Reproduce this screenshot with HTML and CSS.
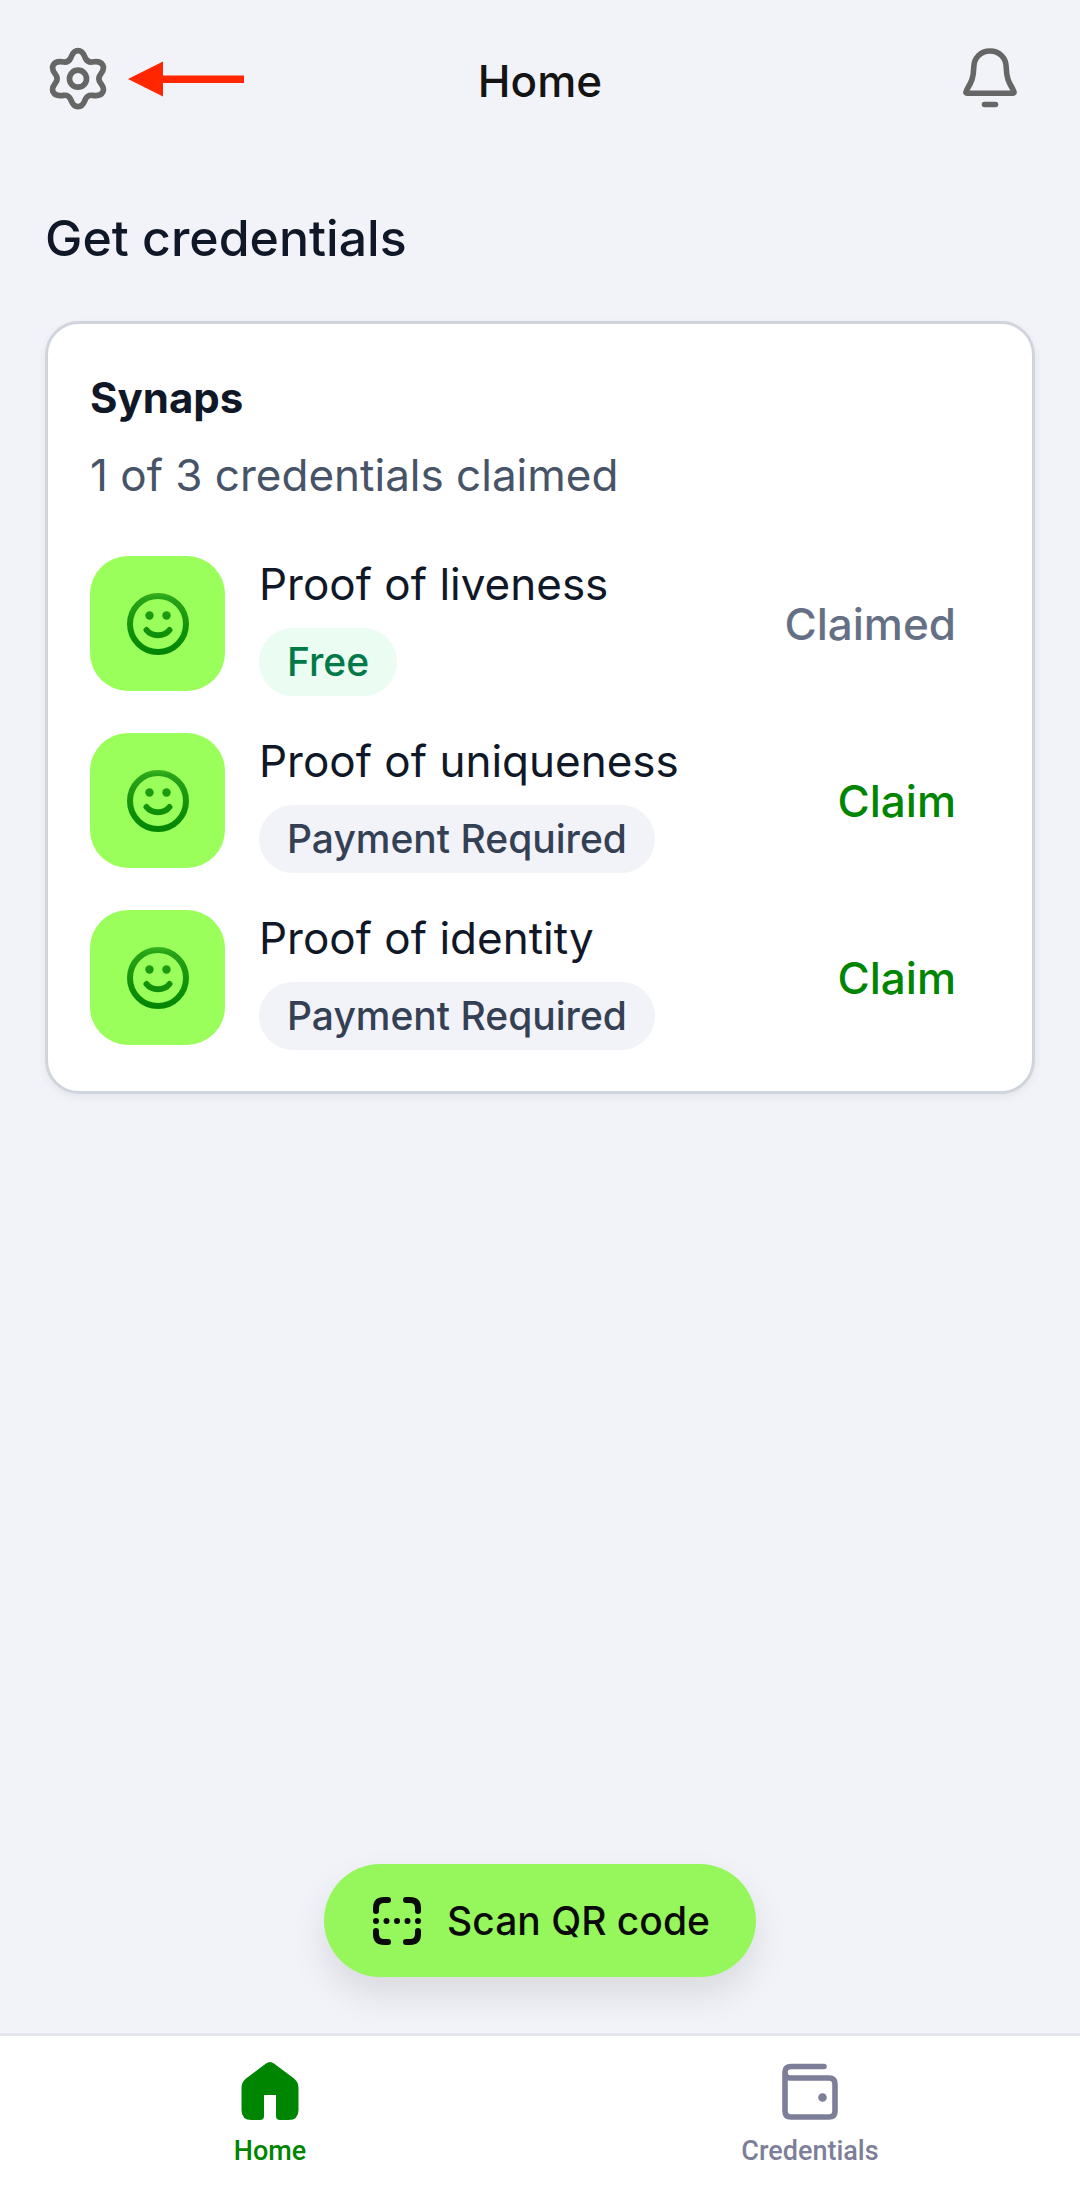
FILE: index.html
```html
<!DOCTYPE html>
<html lang="en">
<head>
    <meta charset="UTF-8">
    <meta name="viewport" content="width=device-width, initial-scale=1.0">
    <title>Home</title>
    <link rel="stylesheet" href="styles.css">
</head>
<body>
    <!-- shared smiley, used by every credential row -->
    <svg class="sprite" aria-hidden="true">
        <defs>
            <linearGradient id="smile-fill" gradientUnits="userSpaceOnUse" x1="32" y1="0" x2="32" y2="64">
                <stop offset="0" stop-color="#3cb722"/>
                <stop offset="0.1" stop-color="#27a318"/>
                <stop offset="1" stop-color="#008400"/>
            </linearGradient>
            <symbol id="smile" viewBox="0 0 64 64">
                <circle cx="32" cy="32" r="28" fill="none" stroke="url(#smile-fill)" stroke-width="6"/>
                <circle cx="23.5" cy="23.5" r="4.2" fill="url(#smile-fill)"/>
                <circle cx="40.5" cy="23.5" r="4.2" fill="url(#smile-fill)"/>
                <path d="M20.500 38C26 45 38 45 43.500 38" fill="none" stroke="url(#smile-fill)" stroke-width="6" stroke-linecap="round"/>
            </symbol>
        </defs>
    </svg>

    <div class="app">
        <header class="topbar">
            <div class="topbar-left">
                <button class="icon-btn" aria-label="Settings">
                    <svg width="60" height="66" viewBox="55 48 180 198" fill="none" stroke="#666" stroke-width="17">
                        <path d="M145 62C160 62 163 75 167 84C171 93 178 97 188 96C200 94 213 93 219 105C226 117 218 126 212 134C207 141 207 151 212 158C218 166 226 175 219 187C213 199 200 198 188 196C178 195 171 199 167 208C163 217 160 230 145 230C130 230 127 217 123 208C119 199 112 195 102 196C90 198 77 199 71 187C64 175 72 166 78 158C83 151 83 141 78 134C72 126 64 117 71 105C77 93 90 94 102 96C112 97 119 93 123 84C127 75 130 62 145 62Z"/>
                        <circle cx="145" cy="146" r="25.500"/>
                    </svg>
                </button>
                <svg class="arrow" width="116" height="36" viewBox="0 0 116 36" fill="#ff2600" aria-hidden="true">
                    <path d="M0 18L35 0.500V14.500H116V22H35V35.500Z"/>
                </svg>
            </div>
            <h1 class="topbar-title">Home</h1>
            <div class="topbar-right">
                <button class="icon-btn" aria-label="Notifications">
                    <svg width="60" height="66" viewBox="0 0 60 66" fill="none" stroke="#666" stroke-width="5.600" stroke-linecap="round" stroke-linejoin="round">
                        <path d="M30 5C20.500 5 14 12 13.800 21C13.500 32 11.500 36 7.500 42.500C5 47 5.200 47.200 9 47.200H51C54.800 47.200 55 47 52.500 42.500C48.500 36 46.500 32 46.200 21C46 12 39.500 5 30 5Z"/>
                        <path d="M24.500 58.500H35.500"/>
                    </svg>
                </button>
            </div>
        </header>

        <main class="content">
            <h2 class="section-title">Get credentials</h2>

            <section class="card">
                <h3 class="card-title">Synaps</h3>
                <p class="card-subtitle">1 of 3 credentials claimed</p>

                <ul class="credentials">
                    <li class="credential">
                        <div class="tile"><svg width="64" height="64"><use href="#smile"/></svg></div>
                        <div class="credential-info">
                            <span class="credential-name">Proof of liveness</span>
                            <span class="badge badge-free">Free</span>
                        </div>
                        <button class="claim" disabled>Claimed</button>
                    </li>
                    <li class="credential">
                        <div class="tile"><svg width="64" height="64"><use href="#smile"/></svg></div>
                        <div class="credential-info">
                            <span class="credential-name">Proof of uniqueness</span>
                            <span class="badge">Payment Required</span>
                        </div>
                        <button class="claim">Claim</button>
                    </li>
                    <li class="credential">
                        <div class="tile"><svg width="64" height="64"><use href="#smile"/></svg></div>
                        <div class="credential-info">
                            <span class="credential-name">Proof of identity</span>
                            <span class="badge">Payment Required</span>
                        </div>
                        <button class="claim">Claim</button>
                    </li>
                </ul>
            </section>
        </main>

        <button class="scan-btn">
            <svg width="48" height="48" viewBox="0 0 48 48" fill="none" stroke="#0a0a0a" stroke-width="6" stroke-linecap="round" aria-hidden="true">
                <path d="M3 14V11Q3 3 11 3H15M33 3H37Q45 3 45 11V14M45 34V37Q45 45 37 45H33M15 45H11Q3 45 3 37V34"/>
                <path d="M3 24H45.100" stroke-dasharray="0 10.500"/>
            </svg>
            Scan QR code
        </button>

        <nav class="tabs">
            <a class="tab active" href="#home">
                <svg width="58" height="60" viewBox="0 0 58 60" fill="currentColor" aria-hidden="true">
                    <path d="M25 2.500Q29 -0.500 33 2.500L53 17.500Q57.500 21 57.500 27V49Q57.500 59 47.500 59H39Q35 59 35 55V34H23V55Q23 59 19 59H10.500Q0.500 59 0.500 49V27Q0.500 21 5 17.500Z"/>
                </svg>
                Home
            </a>
            <a class="tab" href="#credentials">
                <svg width="58" height="60" viewBox="0 0 58 60" fill="none" stroke="currentColor" stroke-width="5.600" stroke-linecap="round" aria-hidden="true">
                    <path d="M43 5.500H10Q4 5.500 4 11V50Q4 56 10 56H48Q54 56 54 50V23Q54 17 48 17H9Q4 17 4 11"/>
                    <circle cx="41.500" cy="36.500" r="4.300" fill="currentColor" stroke="none"/>
                </svg>
                Credentials
            </a>
        </nav>
    </div>
</body>
</html>
```

FILE: styles.css
```css
* {
    box-sizing: border-box;
}
body {
    margin: 0;
    background: #f2f3f8;
    color: #101828;
    font-family: Inter, "Liberation Sans", sans-serif;
    font-size: 44px;
    line-height: 52px;
}
h1, h2, h3, p, ul {
    margin: 0;
    padding: 0;
}
button {
    border: none;
    background: none;
    padding: 0;
    font: inherit;
    color: inherit;
    cursor: pointer;
}
svg {
    display: block;
    flex-shrink: 0;
}
.sprite {
    position: absolute;
    width: 0;
    height: 0;
}
.app {
    display: flex;
    flex-direction: column;
    min-height: 100vh;
}

/* Top bar */
.topbar {
    display: grid;
    grid-template-columns: 1fr auto 1fr;
    align-items: center;
    padding: 46px 48px 42px;
}
.topbar-left {
    display: flex;
    align-items: center;
    gap: 20px;
}
.topbar-right {
    display: flex;
    justify-content: flex-end;
    padding-right: 12px;
}
.topbar-title {
    padding-top: 4px;
    font-size: 44px;
    font-weight: 500;
    color: #141414;
}

/* Credentials card */
.content {
    flex: 1;
    padding: 56px 45px;
}
.section-title {
    font-size: 50px;
    font-weight: 500;
    line-height: 56px;
}
.card {
    margin-top: 55px;
    padding: 48px 76px 41px 42px;
    background: #fff;
    border: 3px solid #d0d5dd;
    border-radius: 34px;
    box-shadow: 0 3px 8px rgba(16, 24, 40, 0.06);
}
.card-title {
    font-size: 42px;
    font-weight: 700;
}
.card-subtitle {
    margin-top: 25px;
    color: #475467;
}
.credentials {
    display: flex;
    flex-direction: column;
    gap: 37px;
    margin-top: 55px;
    list-style: none;
}
.credential {
    display: flex;
    align-items: flex-start;
    gap: 34px;
}
.tile {
    display: flex;
    align-items: center;
    justify-content: center;
    width: 135px;
    height: 135px;
    border-radius: 38px;
    background: #9bff5b;
}
.credential-info {
    display: flex;
    flex: 1;
    flex-direction: column;
    align-items: flex-start;
    gap: 16px;
}
.credential-name {
    line-height: 56px;
}
.badge {
    padding: 0 28px;
    border-radius: 34px;
    background: #f2f3f8;
    color: #344054;
    font-size: 39px;
    font-weight: 500;
    line-height: 68px;
}
.badge-free {
    background: #ebfcf3;
    color: #027a48;
}
.claim {
    height: 135px;
    color: #008500;
    font-weight: 500;
}
.claim:disabled {
    color: #667085;
    cursor: default;
}

/* Floating scan button */
.scan-btn {
    display: flex;
    align-items: center;
    align-self: center;
    gap: 26px;
    height: 113px;
    margin-bottom: 56px;
    padding: 0 46px 0 49px;
    border-radius: 57px;
    background: #95f75b;
    color: #0a0a0a;
    font-size: 39px;
    font-weight: 500;
    box-shadow: 0 18px 36px rgba(0, 0, 0, 0.1);
}

/* Bottom tabs */
.tabs {
    display: flex;
    background: #fff;
    border-top: 3px solid #e4e4ee;
}
.tab {
    display: flex;
    flex: 1;
    flex-direction: column;
    align-items: center;
    gap: 13px;
    padding: 25px 0 31px;
    color: #7d7f99;
    font-family: Roboto, sans-serif;
    font-size: 27px;
    font-weight: 500;
    line-height: 34px;
    text-decoration: none;
}
.tab.active {
    color: #008500;
}
```
